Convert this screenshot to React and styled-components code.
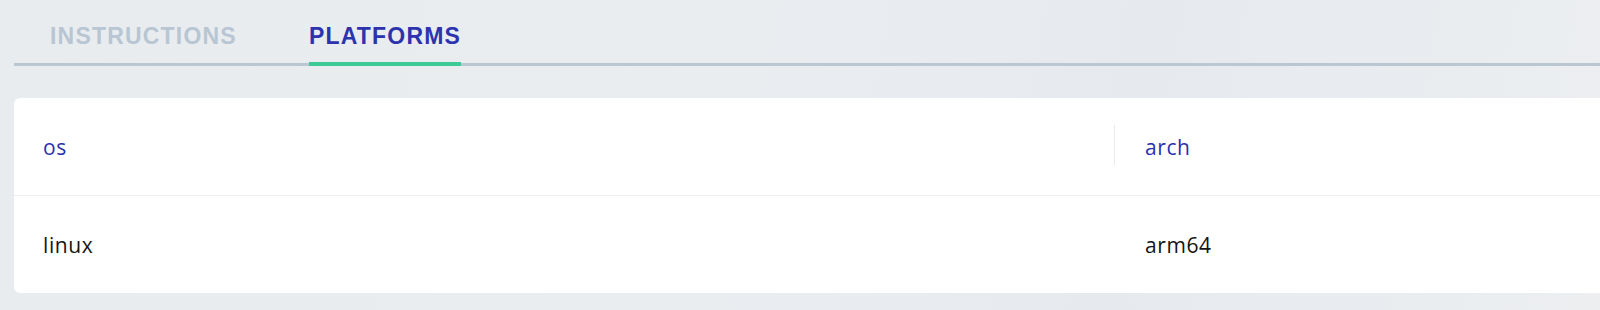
import React from 'react';
import styled, { createGlobalStyle } from 'styled-components';

const GlobalStyle = createGlobalStyle`
  html, body {
    margin: 0;
    padding: 0;
    overflow: hidden;
  }
  body {
    background: linear-gradient(100deg, #e8ecef 0%, #eaedf0 45%, #e6eaef 70%, #eceef0 100%);
    font-family: 'Open Sans', 'Liberation Sans', sans-serif;
  }
`;

const Page = styled.div`
  width: 1700px;
  height: 310px;
  padding: 0 0 0 14px;
  box-sizing: border-box;
`;

const TabBar = styled.div`
  display: flex;
  padding-top: 22px;
  border-bottom: 3px solid #b9c7d3;
`;

const Tab = styled.div`
  margin: 0 36px -3px 36px;
  padding-bottom: 12px;
  border-bottom: 4px solid ${p => (p.active ? '#3ccb98' : 'transparent')};
  font-family: 'Liberation Sans', Arial, sans-serif;
  font-weight: bold;
  font-size: 23px;
  line-height: 28px;
  letter-spacing: 1.2px;
  color: ${p => (p.active ? '#2c33ad' : '#b8c6d3')};
  cursor: pointer;
`;

const Card = styled.div`
  margin-top: 32px;
  background: #ffffff;
  border-radius: 6px;
  overflow: hidden;
`;

const Row = styled.div`
  display: grid;
  grid-template-columns: 1100px 1fr;
  height: 97px;
  border-bottom: ${p => (p.header ? '1px solid #eceef1' : 'none')};
`;

const Cell = styled.div`
  display: flex;
  align-items: center;
  padding-left: ${p => (p.second ? '31px' : '29px')};
  font-size: 21px;
  letter-spacing: 0.6px;
  color: ${p => (p.header ? '#2b2fb0' : '#151515')};
  position: relative;

  ${p => p.header && p.second && `
    &::before {
      content: '';
      position: absolute;
      left: 0;
      top: 27px;
      height: 40px;
      width: 1px;
      background: #e8eaed;
    }
  `}
`;

const columns = ['os', 'arch'];
const rows = [['linux', 'arm64']];

const App = () => (
  <Page>
    <GlobalStyle />
    <TabBar>
      <Tab>INSTRUCTIONS</Tab>
      <Tab active>PLATFORMS</Tab>
    </TabBar>
    <Card>
      <Row header>
        {columns.map((c, i) => (
          <Cell header second={i > 0} key={c}>{c}</Cell>
        ))}
      </Row>
      {rows.map((r, ri) => (
        <Row key={ri}>
          {r.map((v, i) => (
            <Cell second={i > 0} key={i}>{v}</Cell>
          ))}
        </Row>
      ))}
    </Card>
  </Page>
);

export default App;
